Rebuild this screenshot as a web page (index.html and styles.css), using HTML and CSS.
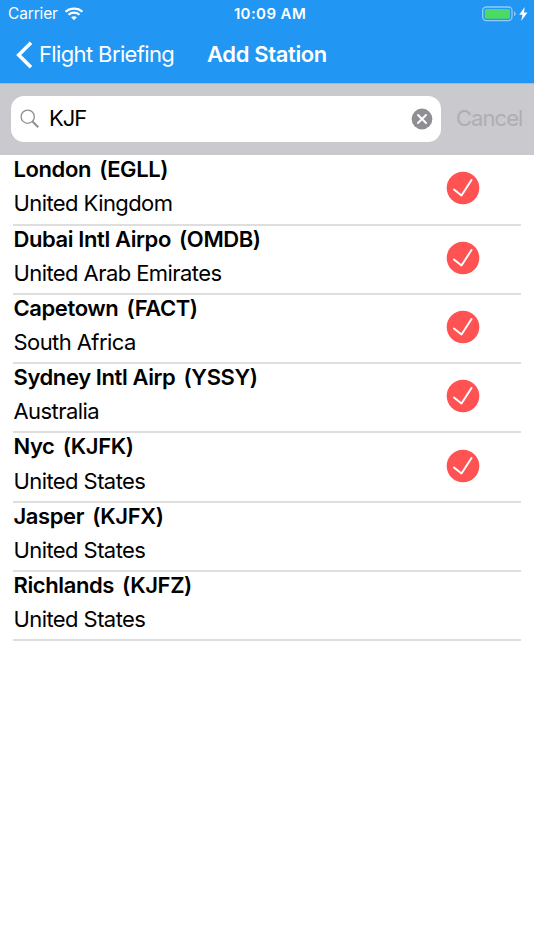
FILE: index.html
```html
<!DOCTYPE html>
<html lang="en">
<head>
    <meta charset="UTF-8">
    <meta name="viewport" content="width=device-width, initial-scale=1.0">
    <title>Add Station</title>
    <link rel="stylesheet" href="styles.css">
</head>
<body>
    <header>
        <div class="status-bar">
            <div class="carrier">
                <span>Carrier</span>
                <svg class="wifi" width="18" height="14" viewBox="0 0 18 14">
                    <path d="M.6 4.800C5 .5 13 .5 17.400 4.800M3.500 7.800C6.600 4.900 11.400 4.900 14.500 7.800" fill="none" stroke="#fff" stroke-width="2.200"/>
                    <path d="M9 13.200L6.100 10.300Q9 8 11.900 10.300Z" fill="#fff"/>
                </svg>
            </div>
            <span class="time">10:09 AM</span>
            <div class="battery">
                <svg width="46" height="16" viewBox="0 0 46 16">
                    <rect x=".7" y="1" width="29.300" height="13.600" rx="3.500" fill="none" stroke="#90caf9" stroke-width="1.300"/>
                    <rect x="2.800" y="3" width="25.200" height="9.800" rx="1.500" fill="#4cd964"/>
                    <path d="M32 5.300Q33.700 6 33.700 7.800T32 10.300Z" fill="#90caf9"/>
                    <path d="M42.700 1L37.200 8.700H40.500L39.200 15L45.500 6.600H42Z" fill="#fff"/>
                </svg>
            </div>
        </div>
        <nav>
            <a class="back" href="#">
                <svg width="17" height="28" viewBox="0 0 17 28">
                    <path d="M15 1.700L2.700 14L15 26.300" fill="none" stroke="#fff" stroke-width="3.600"/>
                </svg>
                <span>Flight Briefing</span>
            </a>
            <h1>Add Station</h1>
        </nav>
    </header>

    <div class="search-bar">
        <div class="search-field">
            <svg class="search-icon" width="20" height="20" viewBox="0 0 20 20">
                <circle cx="7.700" cy="7.700" r="6.600" fill="none" stroke="#8e8e93" stroke-width="1.300"/>
                <path d="M12.500 12.500L18.300 18.300" stroke="#8e8e93" stroke-width="2"/>
            </svg>
            <span class="query">KJF</span>
            <svg class="clear" width="22" height="22" viewBox="0 0 22 22">
                <circle cx="11" cy="11" r="10.400" fill="#8e8e93"/>
                <path d="M7 7L15 15M15 7L7 15" stroke="#fff" stroke-width="2" stroke-linecap="round"/>
            </svg>
        </div>
        <span class="cancel">Cancel</span>
    </div>

    <ul class="stations">
        <li>
            <div><h2>London <span>(EGLL)</span></h2><p>United Kingdom</p></div>
            <svg class="check" viewBox="0 0 34 34"><circle cx="17" cy="17" r="16.300"/><path d="M8 18.500L15.500 24.500L25.500 9"/></svg>
        </li>
        <li>
            <div><h2>Dubai Intl Airpo <span>(OMDB)</span></h2><p>United Arab Emirates</p></div>
            <svg class="check" viewBox="0 0 34 34"><circle cx="17" cy="17" r="16.300"/><path d="M8 18.500L15.500 24.500L25.500 9"/></svg>
        </li>
        <li>
            <div><h2>Capetown <span>(FACT)</span></h2><p>South Africa</p></div>
            <svg class="check" viewBox="0 0 34 34"><circle cx="17" cy="17" r="16.300"/><path d="M8 18.500L15.500 24.500L25.500 9"/></svg>
        </li>
        <li>
            <div><h2>Sydney Intl Airp <span>(YSSY)</span></h2><p>Australia</p></div>
            <svg class="check" viewBox="0 0 34 34"><circle cx="17" cy="17" r="16.300"/><path d="M8 18.500L15.500 24.500L25.500 9"/></svg>
        </li>
        <li>
            <div><h2>Nyc <span>(KJFK)</span></h2><p>United States</p></div>
            <svg class="check" viewBox="0 0 34 34"><circle cx="17" cy="17" r="16.300"/><path d="M8 18.500L15.500 24.500L25.500 9"/></svg>
        </li>
        <li>
            <div><h2>Jasper <span>(KJFX)</span></h2><p>United States</p></div>
        </li>
        <li>
            <div><h2>Richlands <span>(KJFZ)</span></h2><p>United States</p></div>
        </li>
    </ul>
</body>
</html>
```
FILE: styles.css
```css
* {
    box-sizing: border-box;
}

body {
    margin: 0;
    background: #fff;
    color: #000;
    font-family: Inter, "Liberation Sans", sans-serif;
    font-size: 22px;
    letter-spacing: -0.55px;
}

svg {
    display: block;
    flex-shrink: 0;
}

header {
    height: 83px;
    background-color: #2196f3;
    color: white;
}

.status-bar {
    display: grid;
    grid-template-columns: 1fr auto 1fr;
    align-items: center;
    height: 27px;
    padding: 0 6px 0 8px;
    font-size: 15.5px;
    letter-spacing: -0.15px;
}

.carrier {
    display: flex;
    align-items: center;
    gap: 7px;
}

.time {
    padding-left: 4px;
    font-size: 15px;
    font-weight: 600;
    letter-spacing: 0.4px;
}

.battery {
    display: flex;
    justify-content: flex-end;
}

nav {
    display: flex;
    align-items: center;
    height: 55px;
    padding-left: 16px;
}

.back {
    display: flex;
    align-items: center;
    gap: 6px;
    width: 191px;
    color: white;
    text-decoration: none;
    white-space: nowrap;
    letter-spacing: -0.63px;
}

.back span,
h1 {
    padding-bottom: 2px;
}

h1 {
    margin: 0;
    font-size: 22px;
    font-weight: 600;
    letter-spacing: -0.36px;
}

.search-bar {
    display: flex;
    align-items: center;
    height: 72px;
    padding: 0 11px 1px;
    background-color: #c9c9ce;
    border-top: 1px solid #b5b5ba;
}

.search-field {
    display: flex;
    align-items: center;
    flex-shrink: 0;
    width: 430px;
    height: 46px;
    padding: 0 8.5px 0 9px;
    border-radius: 13px;
    background: white;
}

.query {
    flex: 1;
    padding-left: 9px;
    padding-bottom: 2px;
    letter-spacing: -1px;
}

.cancel {
    margin-left: 15px;
    padding-bottom: 2px;
    color: #aeaeb3;
    letter-spacing: -0.95px;
}

.stations {
    margin: 0;
    padding: 0 13px;
    list-style: none;
}

.stations li {
    display: flex;
    justify-content: space-between;
    height: 69.3px;
    padding-right: 41px;
    border-bottom: 2px solid #dedede;
}

.stations li:first-child {
    height: 70.5px;
    padding-top: 1.3px;
}

.stations h2,
.stations p {
    margin: 0;
    padding-left: 0.5px;
    font-size: 22px;
    line-height: 34px;
    white-space: nowrap;
}

.stations p {
    letter-spacing: -0.58px;
}

.stations h2 {
    height: 30.2px;
    line-height: 27.6px;
    font-weight: 600;
    letter-spacing: -0.4px;
}

.stations h2 span {
    margin-left: 3px;
}

.check {
    width: 34px;
    height: 34px;
    margin-top: 15.2px;
    fill: #ff5252;
}

.check path {
    fill: none;
    stroke: #fff;
    stroke-width: 2;
    stroke-linecap: round;
    stroke-linejoin: round;
}
```
